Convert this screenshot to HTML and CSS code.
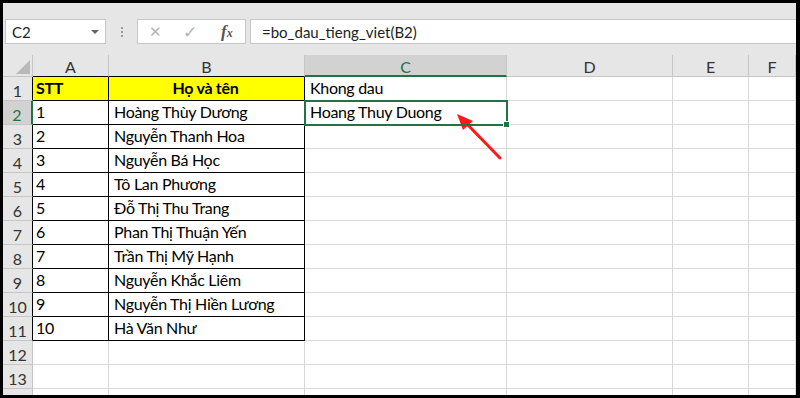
FILE: index.html
```html
<!DOCTYPE html>
<html lang="vi">
<head>
  <meta charset="UTF-8">
  <meta name="viewport" content="width=device-width, initial-scale=1.0">
  <title>bo_dau_tieng_viet</title>
  <link rel="stylesheet" href="styles.css">
</head>
<body>
  <div class="window">
    <div class="toolbar">
      <div class="namebox"><span>C2</span><span class="caret"></span></div>
      <div class="grip"><i></i><i></i><i></i></div>
      <div class="fx-buttons">
        <span class="btn cancel">&#x2715;</span>
        <span class="btn enter">&#x2713;</span>
        <span class="btn fx">f<small>x</small></span>
      </div>
      <div class="formula">=bo_dau_tieng_viet(B2)</div>
    </div>

    <div class="sheet">
      <div class="hdr corner"></div>
      <div class="hdr col tb">A</div>
      <div class="hdr col tb">B</div>
      <div class="hdr col sel">C</div>
      <div class="hdr col">D</div>
      <div class="hdr col">E</div>
      <div class="hdr col">F</div>

      <div class="hdr num edge">1</div>
      <div class="cell t y bold">STT</div>
      <div class="cell t y bold center">Họ và tên</div>
      <div class="cell txt">Khong dau</div>
      <div class="cell"></div><div class="cell"></div><div class="cell"></div>

      <div class="hdr num sel">2</div>
      <div class="cell t a">1</div>
      <div class="cell t">Hoàng Thùy Dương</div>
      <div class="cell txt active">Hoang Thuy Duong</div>
      <div class="cell"></div><div class="cell"></div><div class="cell"></div>

      <div class="hdr num edge">3</div>
      <div class="cell t a">2</div>
      <div class="cell t">Nguyễn Thanh Hoa</div>
      <div class="cell"></div><div class="cell"></div><div class="cell"></div><div class="cell"></div>

      <div class="hdr num edge">4</div>
      <div class="cell t a">3</div>
      <div class="cell t">Nguyễn Bá Học</div>
      <div class="cell"></div><div class="cell"></div><div class="cell"></div><div class="cell"></div>

      <div class="hdr num edge">5</div>
      <div class="cell t a">4</div>
      <div class="cell t">Tô Lan Phương</div>
      <div class="cell"></div><div class="cell"></div><div class="cell"></div><div class="cell"></div>

      <div class="hdr num edge">6</div>
      <div class="cell t a">5</div>
      <div class="cell t">Đỗ Thị Thu Trang</div>
      <div class="cell"></div><div class="cell"></div><div class="cell"></div><div class="cell"></div>

      <div class="hdr num edge">7</div>
      <div class="cell t a">6</div>
      <div class="cell t">Phan Thị Thuận Yến</div>
      <div class="cell"></div><div class="cell"></div><div class="cell"></div><div class="cell"></div>

      <div class="hdr num edge">8</div>
      <div class="cell t a">7</div>
      <div class="cell t">Trần Thị Mỹ Hạnh</div>
      <div class="cell"></div><div class="cell"></div><div class="cell"></div><div class="cell"></div>

      <div class="hdr num edge">9</div>
      <div class="cell t a">8</div>
      <div class="cell t">Nguyễn Khắc Liêm</div>
      <div class="cell"></div><div class="cell"></div><div class="cell"></div><div class="cell"></div>

      <div class="hdr num edge">10</div>
      <div class="cell t a">9</div>
      <div class="cell t">Nguyễn Thị Hiền Lương</div>
      <div class="cell"></div><div class="cell"></div><div class="cell"></div><div class="cell"></div>

      <div class="hdr num edge">11</div>
      <div class="cell t a">10</div>
      <div class="cell t">Hà Văn Như</div>
      <div class="cell"></div><div class="cell"></div><div class="cell"></div><div class="cell"></div>

      <div class="hdr num">12</div>
      <div class="cell"></div><div class="cell"></div><div class="cell"></div><div class="cell"></div><div class="cell"></div><div class="cell"></div>

      <div class="hdr num">13</div>
      <div class="cell"></div><div class="cell"></div><div class="cell"></div><div class="cell"></div><div class="cell"></div><div class="cell"></div>

      <div class="hdr num">14</div>
      <div class="cell"></div><div class="cell"></div><div class="cell"></div><div class="cell"></div><div class="cell"></div><div class="cell"></div>
    </div>

    <svg class="arrow" width="800" height="398" viewBox="0 0 800 398">
      <line x1="500" y1="158" x2="465" y2="122" stroke="#ff1a1a" stroke-width="3" stroke-linecap="round"/>
      <polygon points="457,114 473,121 463,130" fill="#ff1a1a"/>
    </svg>
  </div>
</body>
</html>
```

FILE: styles.css
```css
html, body {
  margin: 0;
  padding: 0;
}

body {
  font-family: Lato, "Noto Sans", sans-serif;
  background: #fff;
}

.window {
  position: relative;
  width: 800px;
  height: 398px;
  box-sizing: border-box;
  border: 3px solid #000;
  border-right-width: 4px;
  background: #e6e6e6;
  overflow: hidden;
  display: flex;
  flex-direction: column;
}

/* formula bar */
.toolbar {
  height: 52px;
  box-sizing: border-box;
  padding: 16px 0 11px 2px;
  display: flex;
  align-items: stretch;
  background: #e6e6e6;
}

.namebox {
  width: 101px;
  box-sizing: border-box;
  background: #fff;
  border: 1px solid #c6c6c6;
  display: flex;
  align-items: center;
  justify-content: space-between;
  padding: 0 6px 0 6px;
  font-size: 15px;
  color: #222;
}

.caret {
  width: 0;
  height: 0;
  border-left: 4px solid transparent;
  border-right: 4px solid transparent;
  border-top: 4px solid #666;
}

.grip {
  width: 31px;
  display: flex;
  flex-direction: column;
  align-items: center;
  justify-content: center;
  gap: 2px;
}

.grip i {
  width: 2px;
  height: 2px;
  background: #9a9a9a;
}

.fx-buttons {
  width: 109px;
  box-sizing: border-box;
  background: #fff;
  border: 1px solid #c6c6c6;
  display: flex;
  align-items: center;
  padding-left: 11px;
}

.btn {
  color: #b4b4b4;
  font-size: 15px;
  font-family: "DejaVu Sans", sans-serif;
}

.cancel {
  width: 34px;
}

.enter {
  width: 38px;
  font-size: 17px;
}

.fx {
  font-family: "Liberation Serif", serif;
  font-style: italic;
  font-weight: bold;
  color: #555;
  font-size: 17px;
}

.fx small {
  font-size: 12px;
}

.formula {
  flex: 1;
  margin-left: 4px;
  background: #fff;
  border: 1px solid #c6c6c6;
  border-right: none;
  display: flex;
  align-items: center;
  padding-left: 11px;
  font-size: 15px;
  color: #222;
}

/* grid */
.sheet {
  flex: 1;
  display: grid;
  grid-template-columns: 30px 76px 196px 202px 166px 76px 1fr;
  grid-template-rows: 22px;
  grid-auto-rows: 24px;
  background: #fff;
  overflow: hidden;
}

.hdr {
  background: #e6e6e6;
  box-sizing: border-box;
  border-right: 1px solid #c6c6c6;
  border-bottom: 1px solid #c6c6c6;
  color: #333;
  font-size: 16px;
  display: flex;
  align-items: center;
  justify-content: center;
}

.col {
  padding-top: 2px;
}

.col.tb {
  border-bottom-color: #000;
}

.hdr.sel {
  background: #d2d2d2;
  color: #217346;
}

.col.sel {
  border-bottom: 2px solid #217346;
}

.num {
  font-size: 16px;
  padding-top: 3px;
}

.num.edge {
  border-right-color: #000;
}

.num.sel {
  border-right: 2px solid #217346;
}

.corner {
  position: relative;
}

.corner::after {
  content: "";
  position: absolute;
  right: 2px;
  bottom: 2px;
  width: 14px;
  height: 14px;
  background: #b9b9b9;
  clip-path: polygon(100% 0, 100% 100%, 0 100%);
}

.cell {
  box-sizing: border-box;
  border-right: 1px solid #d9d9d9;
  border-bottom: 1px solid #d9d9d9;
  font-size: 16px;
  letter-spacing: -0.3px;
  color: #000;
  display: flex;
  align-items: flex-end;
  padding: 0 5px 3px;
  white-space: nowrap;
}

.cell.a {
  padding-left: 3px;
}

.cell.t {
  border-right-color: #000;
  border-bottom-color: #000;
}

.cell.y {
  background: #ffff00;
}

.bold {
  font-weight: bold;
  padding-left: 3px;
}

.center {
  justify-content: center;
}

.active {
  position: relative;
  z-index: 1;
  outline: 2px solid #217346;
  outline-offset: -1px;
}

.active::after {
  content: "";
  position: absolute;
  right: -4px;
  bottom: -4px;
  width: 5px;
  height: 5px;
  background: #217346;
  border: 1px solid #fff;
}

.arrow {
  position: absolute;
  left: -3px;
  top: -3px;
  pointer-events: none;
}
```
